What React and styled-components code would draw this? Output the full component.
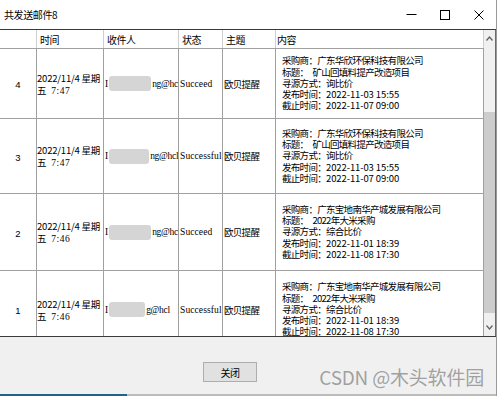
import React from "react";
import styled, { createGlobalStyle } from "styled-components";

const GlobalStyle = createGlobalStyle`
  html, body { margin: 0; padding: 0; background: #fff; }
  body { font-family: "Noto Sans CJK SC", "Noto Sans", sans-serif; color: #000; }
  * { box-sizing: border-box; }
`;

const Window = styled.div`
  width: 497px;
  height: 396px;
  display: flex;
  flex-direction: column;
  border-right: 1px solid #9a9a9a;
  background: #f0f0f0;
`;

const TitleBar = styled.div`
  height: 29px;
  flex: none;
  background: #fff;
  display: flex;
  align-items: center;
  padding-left: 4px;
`;

const Title = styled.span`
  flex: 1;
  font-size: 10px;
  letter-spacing: -0.4px;
  line-height: 12px;
  padding-top: 1px;
`;

const Control = styled.div`
  width: 34px;
  height: 29px;
  display: flex;
  align-items: center;
  justify-content: center;
`;

const Grid = styled.div`
  height: 308px;
  flex: none;
  display: flex;
  background: #fff;
  border-top: 1px solid #3a3a3a;
  border-bottom: 1px solid #3a3a3a;
`;

const Table = styled.div`
  width: 484px;
  flex: none;
  display: flex;
  flex-direction: column;
  overflow: hidden;
`;

const cols = "37px 67px 75px 44px 53px 208px";

const HeaderRow = styled.div`
  display: grid;
  grid-template-columns: ${cols};
  height: 19px;
  flex: none;
  border-bottom: 1px solid #a0a0a0;
`;

const HeaderCell = styled.div`
  border-right: 1px solid #cfcfcf;
  padding-left: ${(p) => p.$pad ?? 3}px;
  font-size: 10px;
  letter-spacing: -0.5px;
  display: flex;
  align-items: center;
  padding-top: 1px;
`;

const Row = styled.div`
  display: grid;
  grid-template-columns: ${cols};
  height: ${(p) => p.$h}px;
  flex: none;
  border-bottom: 1px solid #a0a0a0;
`;

const Cell = styled.div`
  border-right: 1px solid #a0a0a0;
  display: flex;
  align-items: center;
  justify-content: ${(p) => (p.$center ? "center" : "flex-start")};
  padding-left: ${(p) => p.$pad ?? 1}px;
  overflow: hidden;
  white-space: nowrap;
  font-size: 9.5px;
`;

const IndexText = styled.span`
  font-family: "Liberation Sans", "Noto Sans", sans-serif;
  font-size: 9.5px;
  padding-top: 2px;
`;

const DateText = styled.div`
  display: flex;
  flex-direction: column;
  line-height: 12px;
  font-size: 9.5px;
  letter-spacing: -0.2px;
  padding-top: 1px;
`;

const Mono = styled.span`
  font-family: "Liberation Serif", serif;
  font-size: 9.5px;
  letter-spacing: 0.5px;
  margin-left: 5px;
`;

const SerifText = styled.span`
  font-family: "Liberation Serif", serif;
  font-size: 9.5px;
  letter-spacing: ${(p) => p.$ls ?? 0}px;
`;

const Blur = styled.span`
  display: inline-block;
  width: ${(p) => p.$w}px;
  height: 15px;
  background: #d5d5d5;
  border-radius: 3px;
  filter: blur(0.5px);
  margin: 0 1px 0 1px;
  vertical-align: middle;
`;

const Recipient = styled.div`
  display: flex;
  align-items: center;
`;

const CjkText = styled.span`
  font-size: 9.5px;
  letter-spacing: -0.7px;
`;

const Content = styled.div`
  display: flex;
  flex-direction: column;
  font-size: 9.5px;
  letter-spacing: -0.7px;
  line-height: 11.25px;
`;

const Digits = styled.span`
  letter-spacing: -0.1px;
`;

const Gap = styled.span`
  display: inline-block;
  width: 4px;
`;

const Scrollbar = styled.div`
  width: 11px;
  flex: none;
  background: #f0f0f0;
  display: flex;
  flex-direction: column;
`;

const Arrow = styled.div`
  height: 17px;
  flex: none;
  display: flex;
  align-items: center;
  justify-content: center;
`;

const Track = styled.div`
  flex: 1;
  display: flex;
  flex-direction: column;
`;

const Thumb = styled.div`
  margin-top: 65px;
  height: 201px;
  background: #cdcdcd;
`;

const GridEdge = styled.div`
  width: 1px;
  flex: none;
  background: #6a6a6a;
`;

const Footer = styled.div`
  flex: 1;
  position: relative;
  padding: 25px 0 0 203px;
`;

const CloseButton = styled.button`
  width: 54px;
  height: 20px;
  border: 1px solid #adadad;
  background: #e1e1e1;
  font-family: "Noto Sans CJK SC", sans-serif;
  font-size: 10px;
  letter-spacing: -0.5px;
  padding: 0;
  color: #000;
  display: flex;
  align-items: center;
  justify-content: center;
`;

const Watermark = styled.div`
  position: absolute;
  right: 12px;
  top: 29px;
  font-family: "Noto Sans CJK SC", sans-serif;
  font-size: 19px;
  line-height: 22px;
  color: rgba(125, 125, 125, 0.7);
  letter-spacing: -0.2px;
  white-space: nowrap;
`;

const BottomStrip = styled.div`
  height: 2px;
  flex: none;
  display: flex;
`;

const StripPart = styled.div`
  width: ${(p) => (p.$w ? `${p.$w}px` : "auto")};
  flex: ${(p) => (p.$w ? "none" : 1)};
  background: ${(p) => p.$c};
`;

const contentA = [
  ["采购商：广东华欣环保科技有限公司"],
  ["标题：", "矿山回填料提产改造项目", true],
  ["寻源方式：询比价"],
  ["发布时间：", "2022-11-03 15:55"],
  ["截止时间：", "2022-11-07 09:00"],
];
const contentB = [
  ["采购商：广东宝地南华产城发展有限公司"],
  ["标题：", "2022年大米采购", true],
  ["寻源方式：综合比价"],
  ["发布时间：", "2022-11-01 18:39"],
  ["截止时间：", "2022-11-08 17:30"],
];

const rows = [
  { idx: 4, t: "7:47", w: 42, tail: "ng@hcl", status: "Succeed", content: contentA, h: 70 },
  { idx: 3, t: "7:47", w: 40, tail: "ng@hcl", status: "Successful", content: contentA, h: 75 },
  { idx: 2, t: "7:46", w: 42, tail: "ng@hcl", status: "Succeed", content: contentB, h: 77 },
  { idx: 1, t: "7:46", w: 36, tail: "g@hcl", status: "Successful", content: contentB, h: 78 },
];

function ContentLine({ parts }) {
  const [a, b, gap] = parts;
  if (!b) return <span>{a}</span>;
  if (gap)
    return (
      <span>
        {a}
        <Gap />
        {b}
      </span>
    );
  return (
    <span>
      {a}
      <Digits>{b}</Digits>
    </span>
  );
}

export default function App() {
  return (
    <>
      <GlobalStyle />
      <Window>
        <TitleBar>
          <Title>共发送邮件8</Title>
          <Control>
            <svg width="11" height="11" viewBox="0 0 11 11">
              <line x1="0.5" y1="5.5" x2="10.5" y2="5.5" stroke="#000" strokeWidth="1" />
            </svg>
          </Control>
          <Control>
            <svg width="10" height="10" viewBox="0 0 10 10">
              <rect x="0.5" y="0.5" width="9" height="9" fill="none" stroke="#000" strokeWidth="1" />
            </svg>
          </Control>
          <Control>
            <svg width="10" height="10" viewBox="0 0 10 10">
              <path d="M0.5 0.5 L9.5 9.5 M9.5 0.5 L0.5 9.5" stroke="#000" strokeWidth="1" fill="none" />
            </svg>
          </Control>
        </TitleBar>
        <Grid>
          <Table>
            <HeaderRow>
              <HeaderCell />
              <HeaderCell>时间</HeaderCell>
              <HeaderCell>收件人</HeaderCell>
              <HeaderCell>状态</HeaderCell>
              <HeaderCell>主题</HeaderCell>
              <HeaderCell $pad={1}>内容</HeaderCell>
            </HeaderRow>
            {rows.map((r) => (
              <Row key={r.idx} $h={r.h}>
                <Cell $center $pad={0}>
                  <IndexText>{r.idx}</IndexText>
                </Cell>
                <Cell $pad={0}>
                  <DateText>
                    <span>2022/11/4 星期</span>
                    <span>
                      五<Mono>{r.t}</Mono>
                    </span>
                  </DateText>
                </Cell>
                <Cell>
                  <Recipient>
                    <SerifText>I</SerifText>
                    <Blur $w={r.w} />
                    <SerifText $ls={-0.3}>{r.tail}</SerifText>
                  </Recipient>
                </Cell>
                <Cell>
                  <SerifText $ls={0.1}>{r.status}</SerifText>
                </Cell>
                <Cell>
                  <CjkText>欧贝提醒</CjkText>
                </Cell>
                <Cell $pad={6}>
                  <Content>
                    {r.content.map((line, i) => (
                      <ContentLine key={i} parts={line} />
                    ))}
                  </Content>
                </Cell>
              </Row>
            ))}
          </Table>
          <Scrollbar>
            <Arrow>
              <svg width="7" height="5" viewBox="0 0 7 5">
                <path d="M0.5 4.5 L3.5 1 L6.5 4.5" stroke="#606060" strokeWidth="1.2" fill="none" />
              </svg>
            </Arrow>
            <Track>
              <Thumb />
            </Track>
            <Arrow>
              <svg width="7" height="5" viewBox="0 0 7 5">
                <path d="M0.5 0.5 L3.5 4 L6.5 0.5" stroke="#606060" strokeWidth="1.2" fill="none" />
              </svg>
            </Arrow>
          </Scrollbar>
          <GridEdge />
        </Grid>
        <Footer>
          <CloseButton>关闭</CloseButton>
          <Watermark>CSDN @木头软件园</Watermark>
        </Footer>
        <BottomStrip>
          <StripPart $w={127} $c="#1f6388" />
          <StripPart $c="#bcbcbc" />
        </BottomStrip>
      </Window>
    </>
  );
}
